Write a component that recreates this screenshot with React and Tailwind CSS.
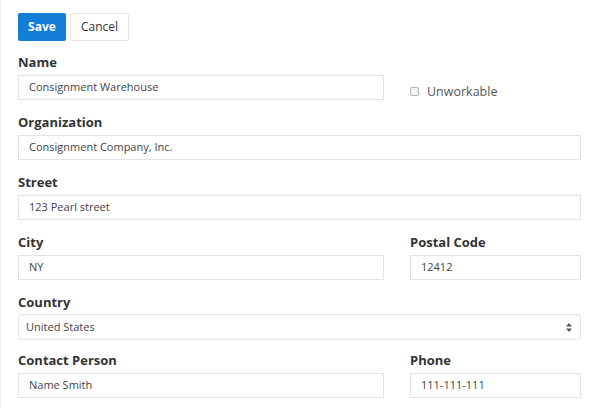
import React from 'react';

const Label = ({ children, className = 'mb-1' }) => (
  <div className={`text-[13px] leading-[18px] font-bold text-[#333] ${className}`}>{children}</div>
);

const Field = ({ value }) => (
  <div className="h-[25px] border border-[#e3e3e3] bg-white px-[10px] flex items-center text-[11px] text-[#444]">
    {value}
  </div>
);

export default function App() {
  return (
    <div className="min-h-screen bg-white border-l border-[#ededed]" style={{ fontFamily: '"Open Sans", sans-serif' }}>
      <div className="pl-[17px] pr-[19px] pt-[13px]">
        {/* Actions */}
        <div className="flex gap-1 mb-3">
          <button className="h-[28px] w-[48px] bg-[#137ed8] text-white text-[12px] font-bold rounded-[2px]">
            Save
          </button>
          <button className="h-[28px] w-[59px] bg-white border border-[#e5e5e5] text-[#333] text-[12px] rounded-[2px]">
            Cancel
          </button>
        </div>

        <div className="grid grid-cols-[366px_1fr] gap-x-[26px] gap-y-[13px]">
          <div>
            <Label>Name</Label>
            <Field value="Consignment Warehouse" />
          </div>
          <div className="h-[47px] pt-[30px] flex items-center gap-2">
            <span className="w-[9px] h-[9px] border border-[#b5b5b5] bg-[#f4f4f4] rounded-[2px]" />
            <span className="text-[12.5px] leading-[17px] text-[#555]">Unworkable</span>
          </div>

          <div className="col-span-2">
            <Label>Organization</Label>
            <Field value="Consignment Company, Inc." />
          </div>

          <div className="col-span-2">
            <Label>Street</Label>
            <Field value="123 Pearl street" />
          </div>

          <div>
            <Label>City</Label>
            <Field value="NY" />
          </div>
          <div>
            <Label>Postal Code</Label>
            <Field value="12412" />
          </div>

          <div className="col-span-2 -mb-[2px]">
            <Label className="mb-[3px]">Country</Label>
            <div className="h-[26px] border border-[#e3e3e3] rounded-[4px] bg-white pl-[7px] pr-[8px] flex items-center justify-between text-[11px] text-[#444]">
              <span>United States</span>
              <svg width="6" height="9" viewBox="0 0 6 9" fill="#555">
                <path d="M3 0 L6 3.5 H0 Z" />
                <path d="M3 9 L6 5.5 H0 Z" />
              </svg>
            </div>
          </div>

          <div>
            <Label>Contact Person</Label>
            <Field value="Name Smith" />
          </div>
          <div>
            <Label>Phone</Label>
            <Field value="111-111-111" />
          </div>
        </div>
      </div>
    </div>
  );
}
